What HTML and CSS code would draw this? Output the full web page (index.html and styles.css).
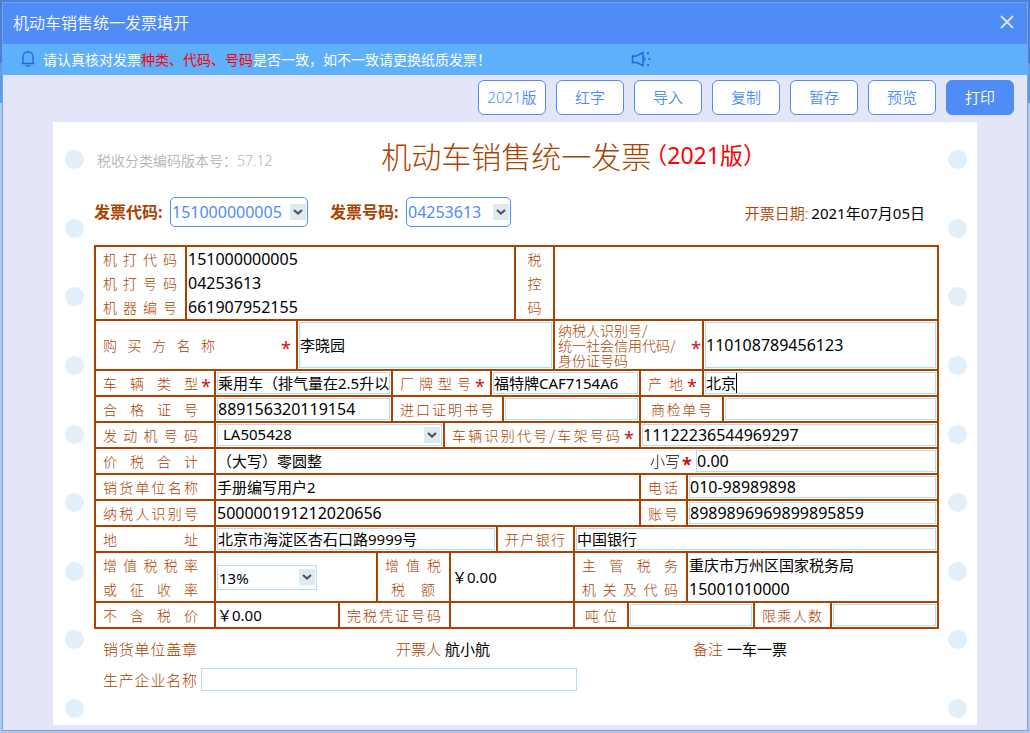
FILE: index.html
```html
<!DOCTYPE html>
<html lang="zh-CN">
<head>
  <meta charset="UTF-8" />
  <meta name="viewport" content="width=device-width, initial-scale=1.0"/>
  <title>机动车销售统一发票填开</title>
  <link rel="stylesheet" href="styles.css">
</head>
<body>
  <div class="window">
    <header class="titlebar">
      <h1>机动车销售统一发票填开</h1>
      <button type="button" class="close" aria-label="关闭">
        <svg width="14" height="14" viewBox="0 0 14 14"><path d="M1 1 L13 13 M13 1 L1 13" fill="none" stroke="#d6e4fd" stroke-width="1.8"/></svg>
      </button>
    </header>

    <div class="notice">
      <svg width="14" height="17" viewBox="0 0 14 17" fill="none" stroke="#1f66e5" stroke-width="1.3"><path d="M0.5 13.5 H13.5 M2 13 V7 Q2 2 7 1.8 Q12 2 12 7 V13 M7 0.4 V1.8"/><path d="M4.5 15.8 H9.5"/></svg>
      <p>请认真核对发票<em>种类、代码、号码</em>是否一致，如不一致请更换纸质发票！</p>
      <svg width="20" height="16" viewBox="0 0 20 16" fill="none" stroke="#1f66e5" stroke-width="1.5"><path d="M1.5 5 H5.5 L12 1.5 V14.5 L5.5 11.5 H1.5 Z"/><path d="M12.5 6 Q15.5 8 12.5 10" stroke-width="1.2"/><path d="M16 2 H18 M17.5 8 H19.5 M16 14 H18" stroke-width="1.8"/></svg>
    </div>

    <div class="toolbar">
      <button type="button">2021版</button>
      <button type="button">红字</button>
      <button type="button">导入</button>
      <button type="button">复制</button>
      <button type="button">暂存</button>
      <button type="button">预览</button>
      <button type="button" class="primary">打印</button>
    </div>

    <main class="sheet">
      <div class="rail"><i></i><i></i><i></i><i></i><i></i><i></i><i></i><i></i><i></i></div>

      <form class="invoice">
        <div class="heading">
          <span class="version">税收分类编码版本号：57.12</span>
          <h2>机动车销售统一发票<span>（2021版）</span></h2>
        </div>

        <div class="codes">
          <label for="code">发票代码:</label>
          <span class="drop code">
            <select id="code"><option>151000000005</option></select>
            <svg class="arrow" viewBox="0 0 16 16"><path d="M4 6 L8 9.5 L12 6"/></svg>
          </span>
          <label for="number">发票号码:</label>
          <span class="drop number">
            <select id="number"><option>04253613</option></select>
            <svg class="arrow" viewBox="0 0 16 16"><path d="M4 6 L8 9.5 L12 6"/></svg>
          </span>
          <span class="date"><span>开票日期:</span>2021年07月05日</span>
        </div>

        <div class="table">
          <div class="row row-machine">
            <div class="cap"><div><span>机打代码</span><span>机打号码</span><span>机器编号</span></div></div>
            <div class="val num"><p>151000000005<br>04253613<br>661907952155</p></div>
            <div class="cap narrow"><div><span>税</span><span>控</span><span>码</span></div></div>
            <div class="val"></div>
          </div>

          <div class="row row-buyer">
            <div class="cap wide"><label for="buyer">购买方名称</label><b class="star">*</b></div>
            <div class="val"><input type="text" id="buyer" value="李晓园"></div>
            <div class="cap taxid"><label for="taxid">纳税人识别号/<br>统一社会信用代码/<br>身份证号码</label><b class="star">*</b></div>
            <div class="val num"><input type="text" id="taxid" value="110108789456123"></div>
          </div>

          <div class="row row-type">
            <div class="cap first"><label for="type">车辆类型</label><b class="star">*</b></div>
            <div class="val"><input type="text" id="type" value="乘用车（排气量在2.5升以"></div>
            <div class="cap"><label for="model">厂牌型号</label><b class="star">*</b></div>
            <div class="val"><input type="text" id="model" value="福特牌CAF7154A6"></div>
            <div class="cap"><label for="origin">产地</label><b class="star">*</b></div>
            <div class="val focused"><input type="text" id="origin" value="北京"><i class="caret"></i></div>
          </div>

          <div class="row row-cert">
            <div class="cap first"><label for="cert">合格证号</label></div>
            <div class="val num"><input type="text" id="cert" value="889156320119154"></div>
            <div class="cap"><label for="import">进口证明书号</label></div>
            <div class="val"><input type="text" id="import"></div>
            <div class="cap short"><label for="inspect">商检单号</label></div>
            <div class="val"><input type="text" id="inspect"></div>
          </div>

          <div class="row row-engine">
            <div class="cap first"><label for="engine">发动机号码</label></div>
            <div class="val">
              <span class="drop engine">
                <select id="engine"><option>LA505428</option></select>
                <svg class="arrow" viewBox="0 0 16 16"><path d="M4 6 L8 9.5 L12 6"/></svg>
              </span>
            </div>
            <div class="cap"><label for="vin">车辆识别代号/车架号码</label><b class="star">*</b></div>
            <div class="val num"><input type="text" id="vin" value="11122236544969297"></div>
          </div>

          <div class="row row-total">
            <div class="cap first"><span>价税合计</span></div>
            <div class="val total"><p>（大写）零圆整</p><label for="total">小写</label><b class="star">*</b></div>
            <div class="val num plain"><input type="text" id="total" value="0.00"></div>
          </div>

          <div class="row row-seller">
            <div class="cap first"><span>销货单位名称</span></div>
            <div class="val"><p>手册编写用户2</p></div>
            <div class="cap"><label for="phone">电话</label></div>
            <div class="val num"><input type="text" id="phone" value="010-98989898"></div>
          </div>

          <div class="row row-seller">
            <div class="cap first"><span>纳税人识别号</span></div>
            <div class="val num"><p>500000191212020656</p></div>
            <div class="cap"><label for="account">账号</label></div>
            <div class="val num"><input type="text" id="account" value="8989896969899895859"></div>
          </div>

          <div class="row row-address">
            <div class="cap first"><label for="address">地址</label></div>
            <div class="val"><input type="text" id="address" value="北京市海淀区杏石口路9999号"></div>
            <div class="cap"><label for="bank">开户银行</label></div>
            <div class="val"><input type="text" id="bank" value="中国银行"></div>
          </div>

          <div class="row row-rate">
            <div class="cap first"><label for="rate"><span>增值税税率</span><span>或征收率</span></label></div>
            <div class="val">
              <span class="drop rate">
                <select id="rate"><option>13%</option></select>
                <svg class="arrow" viewBox="0 0 16 16"><path d="M4 6 L8 9.5 L12 6"/></svg>
              </span>
            </div>
            <div class="cap"><div><span>增值税</span><span class="inset">税额</span></div></div>
            <div class="val"><p>￥0.00</p></div>
            <div class="cap"><div><span>主管税务</span><span>机关及代码</span></div></div>
            <div class="val"><p>重庆市万州区国家税务局<br><span class="num">15001010000</span></p></div>
          </div>

          <div class="row row-net">
            <div class="cap first"><span>不含税价</span></div>
            <div class="val"><p>￥0.00</p></div>
            <div class="cap"><span>完税凭证号码</span></div>
            <div class="val"></div>
            <div class="cap short"><label for="tonnage">吨位</label></div>
            <div class="val"><input type="text" id="tonnage"></div>
            <div class="cap"><label for="seats">限乘人数</label></div>
            <div class="val"><input type="text" id="seats"></div>
          </div>
        </div>

        <div class="signs">
          <p><span class="long">销货单位盖章</span></p>
          <p><span>开票人</span>航小航</p>
          <p><span>备注</span>一车一票</p>
        </div>
        <div class="maker">
          <label for="maker" class="long">生产企业名称</label>
          <input type="text" id="maker">
        </div>
      </form>

      <div class="rail"><i></i><i></i><i></i><i></i><i></i><i></i><i></i><i></i><i></i></div>
    </main>
  </div>
</body>
</html>
```
FILE: styles.css
```css
* {
  box-sizing: border-box;
}

body {
  margin: 0;
  padding: 3px;
  font-family: "Noto Sans", "Noto Sans CJK SC", sans-serif;
  font-size: 15px;
  color: #000;
  background: linear-gradient(#4a80dc 0, #4a80dc 63px, #5a9ee8 63px, #5a9ee8 103px, #abcaee 103px);
}

h1, h2, p {
  margin: 0;
  font-weight: normal;
}

button, input, select {
  font: inherit;
  color: inherit;
  margin: 0;
}

svg {
  display: block;
}

.window {
  background: #e4e5f9;
  padding-bottom: 5px;
  box-shadow: 0 0 0 1px #7ea4e0;
}

.titlebar {
  display: flex;
  align-items: center;
  justify-content: space-between;
  height: 41px;
  padding: 0 13px 3px 10px;
  background: #508cf5;
  color: #fff;
}

.titlebar h1 {
  font-size: 16px;
  font-weight: 350;
}

.close {
  padding: 0;
  border: 0;
  background: none;
}

.notice {
  display: grid;
  grid-template-columns: 22px 588fr 396fr;
  align-items: center;
  height: 31px;
  padding: 0 0 2px 18px;
  background: #5eb0fa;
  color: #fff;
  font-size: 14px;
  white-space: nowrap;
}

.notice em {
  font-style: normal;
  color: #f00;
}

/* buttons */
.toolbar {
  display: flex;
  justify-content: flex-end;
  gap: 10px;
  padding: 5px 13px 7px;
}

.toolbar button {
  width: 68px;
  height: 35px;
  padding: 0 0 2px;
  border: 1px solid #508cf5;
  border-radius: 6px;
  background: #fff;
  color: #508cf5;
  font-weight: 350;
}

.toolbar .primary {
  background: #508cf5;
  color: #fff;
}

/* paper */
.sheet {
  display: flex;
  margin: 0 50px;
  padding: 0 10px 0 12px;
  background: #fff;
}

.rail {
  display: flex;
  flex-direction: column;
  justify-content: space-between;
  padding: 28px 0 7px;
}

.rail i {
  width: 19px;
  height: 19px;
  border-radius: 50%;
  background: #e1effb;
}

.invoice {
  flex: 1;
  min-width: 0;
  margin: 0 9px 0 10px;
  padding-bottom: 34px;
}

.heading {
  display: flex;
  align-items: center;
  height: 70px;
  white-space: nowrap;
}

.version {
  flex: 0 0 34%;
  padding: 6px 0 0 3px;
  font-size: 14px;
  font-weight: 350;
  color: #b4b4b4;
}

.heading h2 {
  display: flex;
  align-items: center;
  padding-bottom: 4px;
  font-family: KaiTi, "Noto Sans CJK SC", serif;
  font-size: 30px;
  font-weight: 300;
  line-height: 40px;
  color: #a84300;
}

.heading h2 span {
  font-family: "Noto Sans", "Noto Sans CJK SC", sans-serif;
  font-size: 23px;
  font-weight: 400;
  color: #f00;
  margin-left: -7px;
}

.codes {
  display: flex;
  align-items: center;
  height: 40px;
  margin-bottom: 13px;
  white-space: nowrap;
}

.codes label {
  width: 76px;
  padding-bottom: 2px;
  font-size: 16px;
  font-weight: bold;
  color: #a84300;
}

.date {
  margin: 0 14px 0 auto;
}

.date span {
  margin-right: 3px;
  font-weight: 350;
  color: #a84300;
}

/* drop-downs */
.drop {
  position: relative;
  display: block;
}

.drop select {
  appearance: none;
  display: block;
  width: 100%;
  height: 100%;
  padding: 0 20px 2px 1px;
  border: 1px solid #b5dbf5;
  border-radius: 0;
  background: #fff;
}

.arrow {
  position: absolute;
  top: 0;
  bottom: 0;
  right: 2px;
  width: 16px;
  height: 16px;
  margin: auto 0;
  background: #dee9f2;
  fill: none;
  stroke: #505256;
  stroke-width: 2.2;
  pointer-events: none;
}

.code, .number {
  height: 30px;
  font-size: 16px;
  color: #508cf5;
}

.code {
  width: 138px;
  margin-right: 22px;
}

.number {
  width: 105px;
}

.code select, .number select {
  padding-bottom: 0;
  border-color: #508cf5;
  border-radius: 5px;
}

.engine {
  width: 100%;
  height: 22px;
}

.engine select {
  padding-left: 5px;
  line-height: 16px;
}

.rate {
  width: 100px;
  height: 25px;
}

/* invoice table */
.table {
  border: 2px solid #a84300;
}

.row {
  display: grid;
  grid-template-rows: 100%;
  height: 24px;
  line-height: 24px;
  box-sizing: content-box;
}

.row + .row {
  border-top: 2px solid #a84300;
}

.row > div {
  display: flex;
  align-items: center;
  min-width: 0;
}

.row > div + div {
  border-left: 2px solid #a84300;
}

.row > .plain.plain {
  border-left-color: transparent;
}

.row-machine { height: 72px; grid-template-columns: 89fr 329fr 39fr 384fr; }
.row-buyer   { height: 48px; grid-template-columns: 200fr 257fr 149fr 235fr; }
.row-type    { grid-template-columns: 118fr 177fr 99fr 149fr 63fr 235fr; }
.row-cert    { grid-template-columns: 118fr 177fr 111fr 137fr 83fr 215fr; }
.row-engine  { grid-template-columns: 118fr 229fr 196fr 298fr; }
.row-total   { grid-template-columns: 118fr 479fr 244fr; }
.row-seller  { grid-template-columns: 118fr 425fr 47fr 251fr; }
.row-address { grid-template-columns: 118fr 282fr 77fr 364fr; }
.row-rate    { height: 48px; grid-template-columns: 118fr 162fr 73fr 124fr 113fr 251fr; }
.row-net     { grid-template-columns: 118fr 124fr 111fr 124fr 54fr 126fr 77fr 107fr; }

.cap {
  position: relative;
  padding: 0 8px 1px 7px;
  font-family: KaiTi, "Noto Sans CJK SC", serif;
  font-size: 14px;
  font-weight: 300;
  color: #a84300;
  white-space: nowrap;
}

.cap > :first-child {
  flex: 1;
  text-align-last: justify;
}

.cap div span, .cap label span {
  display: block;
}

.cap .inset {
  padding: 0 6px;
}

.row > .first {
  padding-right: 16px;
}

.row > .narrow {
  padding: 0 0 1px;
}

.narrow > :first-child {
  text-align-last: center;
}

.row > .short {
  padding: 0 10px 1px;
}

.star {
  width: 10px;
  flex: none;
  font-family: "Noto Sans", sans-serif;
  font-size: 18px;
  line-height: 24px;
  height: 18px;
  text-align: center;
  color: #d00f14;
}

.cap .star {
  margin: 0 -3px 0 4px;
}

.first .star {
  margin: 0 -13px 0 3px;
}

.wide > :first-child {
  flex: 0 0 112px;
}

.wide .star {
  margin-left: auto;
}

.row > .taxid {
  padding: 0 4px 0 3px;
}

.taxid > :first-child {
  line-height: 15px;
  text-align-last: left;
}

.val input {
  width: 100%;
  height: 100%;
  min-width: 0;
  padding: 0 0 1px;
  border: 1px solid #b5dbf5;
  background: #fff;
}

.row > .val {
  padding: 1px;
  white-space: nowrap;
}

.val p {
  margin-top: -1px;
}

.num {
  font-size: 16px;
}

.total p {
  flex: 1;
}

.total label {
  font-family: KaiTi, "Noto Sans CJK SC", serif;
  font-weight: 300;
}

.total .star {
  margin-left: 2px;
}

.focused {
  position: relative;
}

.caret {
  position: absolute;
  left: 32px;
  top: 2px;
  width: 1px;
  height: 20px;
  background: #000;
}

/* below the table */
.signs {
  display: grid;
  grid-template-columns: 293fr 297fr 246fr;
  align-items: center;
  height: 39px;
  padding-left: 9px;
}

.signs span, .maker label {
  display: inline-block;
  font-family: KaiTi, "Noto Sans CJK SC", serif;
  font-weight: 300;
  color: #a84300;
  margin-right: 4px;
}

.signs .long, .maker .long {
  flex: none;
  width: 94px;
  text-align-last: justify;
}

.maker {
  display: flex;
  align-items: center;
  padding-left: 9px;
}

.maker input {
  width: 45%;
  height: 23px;
  border: 1px solid #b5dbf5;
}
```
